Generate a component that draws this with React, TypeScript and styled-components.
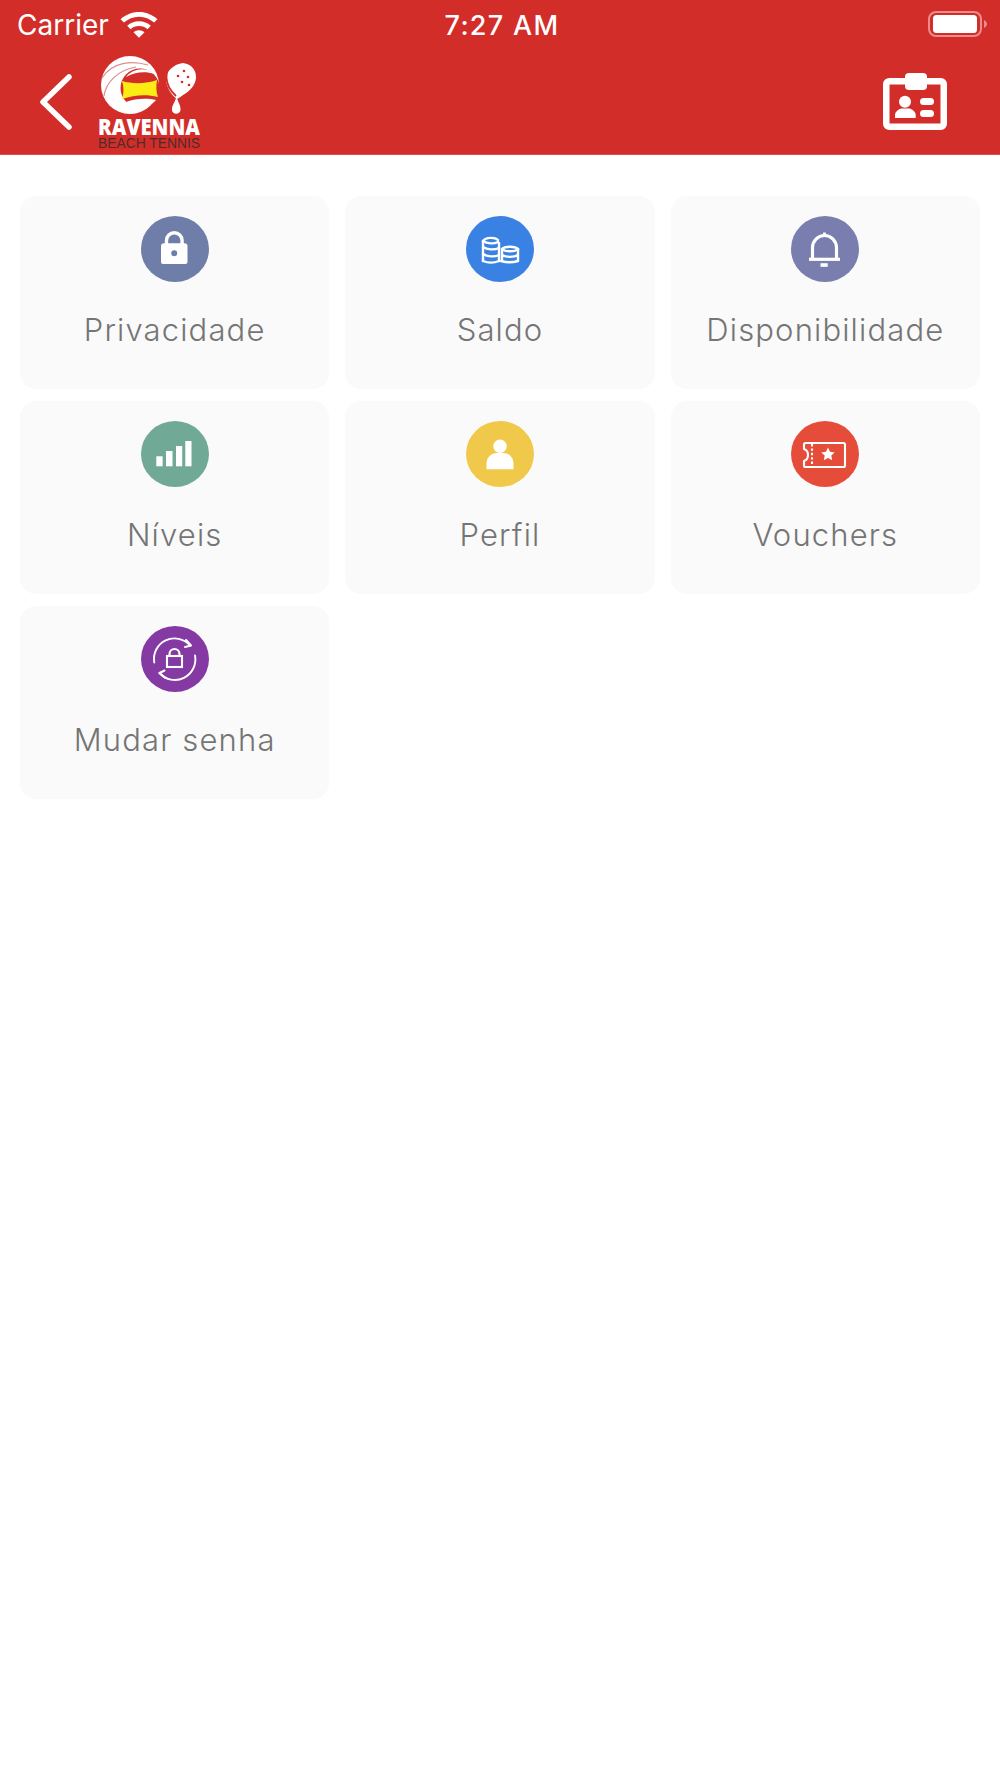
import React from "react";
import styled, { createGlobalStyle } from "styled-components";

const Global = createGlobalStyle`
  html, body { margin: 0; padding: 0; background: #fff; }
  body { font-family: Inter, "Liberation Sans", sans-serif; }
`;

const Page = styled.div`
  width: 1000px;
  height: 1778px;
  background: #fff;
  overflow: hidden;
`;

const Header = styled.header`
  height: 155px;
  box-sizing: border-box;
  background: #d32d2a;
  border-bottom: 1px solid #dc4d4a;
  display: flex;
  flex-direction: column;
`;

const StatusBar = styled.div`
  height: 50px;
  display: grid;
  grid-template-columns: 1fr auto 1fr;
  align-items: center;
  padding: 0 13px 0 17px;
  color: #fff;
`;

const StatusLeft = styled.div`
  display: flex;
  align-items: center;
  gap: 11px;
  font-size: 28px;
  font-weight: 400;
`;

const Time = styled.div`
  font-size: 27px;
  font-weight: 500;
  letter-spacing: 1.3px;
`;

const StatusRight = styled.div`
  display: flex;
  justify-content: flex-end;
`;

const NavBar = styled.div`
  flex: 1;
  display: flex;
  align-items: flex-start;
  justify-content: space-between;
  padding: 0 51px 0 38px;
`;

const NavLeft = styled.div`
  display: flex;
  align-items: flex-start;
  gap: 22px;
`;

const BackIcon = styled.svg`
  margin-top: 22px;
  display: block;
`;

const Logo = styled.svg`
  display: block;
`;

const BadgeIcon = styled.svg`
  margin-top: 23px;
  display: block;
`;

const Grid = styled.main`
  display: grid;
  grid-template-columns: repeat(3, 1fr);
  column-gap: 16px;
  row-gap: 12.2px;
  padding: 41px 20px 0;
`;

const Card = styled.div`
  height: 193px;
  border-radius: 16px;
  background: #fafafa;
  display: flex;
  flex-direction: column;
  align-items: center;
  padding-top: 20px;
  box-sizing: border-box;
`;

const Circle = styled.div<{ $color: string }>`
  width: 68px;
  height: 66px;
  border-radius: 50%;
  background: ${(p) => p.$color};
  display: flex;
  align-items: center;
  justify-content: center;
`;

const Label = styled.div`
  margin-top: 30px;
  font-family: Inter, "Liberation Sans", sans-serif;
  font-size: 31px;
  line-height: 36px;
  font-weight: 300;
  letter-spacing: 1.15px;
  color: #757575;
`;

const IconSvg = styled.svg`
  display: block;
`;

const Lock = () => (
  <IconSvg width="68" height="66" viewBox="0 0 68 66">
    <path d="M25.500 28v-3.500a7.800 7.800 0 0 1 15.600 0V28" fill="none" stroke="#fff" strokeWidth="3.400" />
    <path fillRule="evenodd" fill="#fff" d="M23 27.300h20.500a3 3 0 0 1 3 3V46a2 2 0 0 1-2 2H22a2 2 0 0 1-2-2V30.300a3 3 0 0 1 3-3Zm10.200 7a3 3 0 1 0 0 6 3 3 0 0 0 0-6Z" />
  </IconSvg>
);

const Coins = () => (
  <IconSvg width="68" height="66" viewBox="0 0 68 66" fill="none" stroke="#fff" strokeWidth="2.400" strokeLinecap="round">
    <path d="M17 25v20M32 26c-4 2-11 2-15-1 3-4 12-4 15-1" />
    <path d="M17 31c4 3 12 3 16 1M17 38c4 3 12 3 16 1M17 45c5 2 11 2 16 0" />
    <path d="M33 27v18" />
    <path d="M36 33c3-3 13-3 16 0-3 3-13 3-16 0Z" />
    <path d="M36 33v12M52 33v12M36 39c4 2.500 12 2.500 16 0M35 45c5 1.500 12 1.500 17 0" />
  </IconSvg>
);

const Bell = () => (
  <IconSvg width="68" height="66" viewBox="0 0 68 66" fill="none" stroke="#fff" strokeWidth="3.200">
    <path d="M21.500 43V31.500a12 12 0 0 1 24 0V43" />
    <path d="M18 43.300h31" strokeWidth="3.200" />
    <path d="M29.500 49h7.200" strokeWidth="3.600" />
    <path d="M33.500 16.500v3" strokeWidth="2.800" />
  </IconSvg>
);

const Bars = () => (
  <IconSvg width="68" height="66" viewBox="0 0 68 66" fill="#fff">
    <rect x="15.300" y="35.300" width="6.300" height="10" />
    <rect x="25" y="30" width="6.500" height="15.300" />
    <rect x="35" y="25" width="6.200" height="20.300" />
    <rect x="44.300" y="20" width="6.200" height="25.300" />
  </IconSvg>
);

const Person = () => (
  <IconSvg width="68" height="66" viewBox="0 0 68 66" fill="#fff">
    <circle cx="34" cy="25.300" r="6.700" />
    <path d="M20.500 48.300V42a10 10 0 0 1 10-10h7a10 10 0 0 1 10 10v6.300Z" />
  </IconSvg>
);

const Ticket = () => (
  <IconSvg width="68" height="66" viewBox="0 0 68 66" fill="none" stroke="#fff" strokeWidth="2.100">
    <path d="M14.500 22h38a1.500 1.500 0 0 1 1.500 1.500v21a1.500 1.500 0 0 1-1.500 1.500h-38a1.500 1.500 0 0 1-1.500-1.500V40c3-1 4-3.500 4-6s-1-5-4-6v-4.500a1.500 1.500 0 0 1 1.500-1.500Z" strokeLinejoin="round" />
    <path d="M21 23v22" strokeDasharray="2.400 2" />
    <path stroke="none" fill="#fff" d="M37 26.500l2 4.300 4.700.6-3.400 3.200.9 4.700-4.200-2.300-4.200 2.300.9-4.700-3.400-3.200 4.700-.6Z" />
  </IconSvg>
);

const LockCycle = () => (
  <IconSvg width="68" height="66" viewBox="0 0 68 66" fill="none" stroke="#fff" strokeWidth="1.900">
    <rect x="26" y="30" width="15" height="11" strokeWidth="2.100" />
    <path d="M28.500 30v-2a5 5 0 0 1 10 0v2" strokeWidth="2.200" />
    <path d="M49 19.500A20.500 20.500 0 0 0 13.300 36.500" strokeLinecap="round" />
    <path d="M18.500 47A20.500 20.500 0 0 0 54 29.500" strokeLinecap="round" />
    <path d="M45 14l5 5.500-6 1.500" strokeLinecap="round" strokeLinejoin="round" strokeWidth="2.100" />
    <path d="M23.500 44.500l-5 2.500 5.200 4.500" strokeLinecap="round" strokeLinejoin="round" strokeWidth="2.100" />
  </IconSvg>
);

const items = [
  { label: "Privacidade", color: "#6e7ea9", icon: <Lock /> },
  { label: "Saldo", color: "#3a81e4", icon: <Coins /> },
  { label: "Disponibilidade", color: "#797eae", icon: <Bell /> },
  { label: "Níveis", color: "#70aa96", icon: <Bars /> },
  { label: "Perfil", color: "#f1c94a", icon: <Person /> },
  { label: "Vouchers", color: "#e54d3a", icon: <Ticket /> },
  { label: "Mudar senha", color: "#8439a3", icon: <LockCycle /> },
];

export default function App() {
  return (
    <Page>
      <Global />
      <Header>
        <StatusBar>
          <StatusLeft>
            Carrier
            <svg width="38" height="26" viewBox="0 0 38 26">
              <path fill="#fff" d="M19 0c7 0 13.500 2.700 18.400 7.200l-3.300 3.400C30 7 24.800 4.800 19 4.800S8 7 3.900 10.600L.6 7.200C5.500 2.700 12 0 19 0Z" />
              <path fill="#fff" d="M19 9.300c4.500 0 8.600 1.700 11.800 4.500l-3.300 3.400c-2.300-1.900-5.200-3.100-8.500-3.100s-6.200 1.200-8.500 3.100l-3.300-3.400c3.200-2.800 7.300-4.500 11.800-4.500Z" />
              <path fill="#fff" d="M19 18.200c2.100 0 4 .7 5.500 2L19 25.800l-5.500-5.600c1.500-1.300 3.400-2 5.500-2Z" />
            </svg>
          </StatusLeft>
          <Time>7:27 AM</Time>
          <StatusRight>
            <svg width="60" height="28" viewBox="0 0 60 28">
              <rect x="2" y="1" width="52" height="24" rx="7" fill="none" stroke="#e98c8a" strokeWidth="2" />
              <rect x="6" y="4" width="44" height="18" rx="3.500" fill="#fff" />
              <path d="M57 9c2 1 3 2.500 3 4s-1 3-3 4Z" fill="#e98c8a" />
            </svg>
          </StatusRight>
        </StatusBar>
        <NavBar>
          <NavLeft>
            <BackIcon width="36" height="60" viewBox="0 0 36 60">
              <path d="M31 5 5 30l26 25" fill="none" stroke="#fff" strokeWidth="5.500" strokeLinecap="round" strokeLinejoin="round" />
            </BackIcon>
            <Logo width="106" height="100" viewBox="0 0 106 100">
              <circle cx="34" cy="35" r="29" fill="#fff" />
              <path d="M6 28C16 12 36 10 52 15" fill="none" stroke="#dc8f8d" strokeWidth="1.200" />
              <path d="M8 46C10 32 22 20 40 17" fill="none" stroke="#dc8f8d" strokeWidth="1.200" />
              <circle cx="44" cy="38" r="19.500" fill="#d32d2a" />
              <path d="M30 27C36 19 50 16 58 24 50 21 38 22 30 27Z" fill="#fff" />
              <path d="M26 31C36 34 50 34 61 30 60 36 60 42 62 47 50 44 38 45 26 49 28 43 28 37 26 31Z" fill="#fbec14" />
              <path d="M30 52C40 48 52 48 60 50 54 57 44 60 36 58Z" fill="#fff" />
              <path d="M87 13c9 1 13.500 8 13 15-.6 7-6 13-13 17-2 1.500-4 3-6 4-6-4-11-13-11-20 0-8 8-15 17-16Z" fill="#fff" />
              <path d="M76 15c-7 5-9 19 4 31" fill="none" stroke="#d32d2a" strokeWidth="1.800" />
              <circle cx="88" cy="21" r="1.300" fill="#d32d2a" />
              <circle cx="82" cy="26" r="1.300" fill="#d32d2a" />
              <circle cx="92" cy="27" r="1.300" fill="#d32d2a" />
              <circle cx="86" cy="32" r="1.300" fill="#d32d2a" />
              <circle cx="93" cy="35" r="1.300" fill="#d32d2a" />
              <path d="M80.500 46c1 6 4.500 9 4 14-.6 5-8 5-8.500 0-.4-5 3.500-8 4.500-14Z" fill="#fff" />
              <text x="53" y="85" textAnchor="middle" fontFamily="'Open Sans', 'Liberation Sans', sans-serif" fontWeight="800" fontSize="22" fill="#fff" textLength="102" lengthAdjust="spacingAndGlyphs">RAVENNA</text>
              <text x="53" y="98" textAnchor="middle" fontFamily="'Liberation Sans', sans-serif" fontWeight="400" fontSize="15" fill="#4f2c2b" textLength="102" lengthAdjust="spacingAndGlyphs">BEACH TENNIS</text>
            </Logo>
          </NavLeft>
          <BadgeIcon width="66" height="60" viewBox="0 0 66 60">
            <rect x="3.250" y="8.250" width="57.500" height="45.500" rx="3" fill="none" stroke="#fff" strokeWidth="6.500" />
            <rect x="22" y="0" width="22" height="17" rx="4" fill="#fff" />
            <circle cx="22" cy="28.700" r="6" fill="#fff" />
            <path d="M12 45v-3c0-3 3-5.500 6-6.500h8.700c3 1 6 3.500 6 6.500v3Z" fill="#fff" />
            <rect x="37" y="25" width="14" height="7" rx="3.500" fill="#fff" />
            <rect x="37" y="37" width="14" height="7" rx="3.500" fill="#fff" />
          </BadgeIcon>
        </NavBar>
      </Header>
      <Grid>
        {items.map((it) => (
          <Card key={it.label}>
            <Circle $color={it.color}>{it.icon}</Circle>
            <Label>{it.label}</Label>
          </Card>
        ))}
      </Grid>
    </Page>
  );
}
